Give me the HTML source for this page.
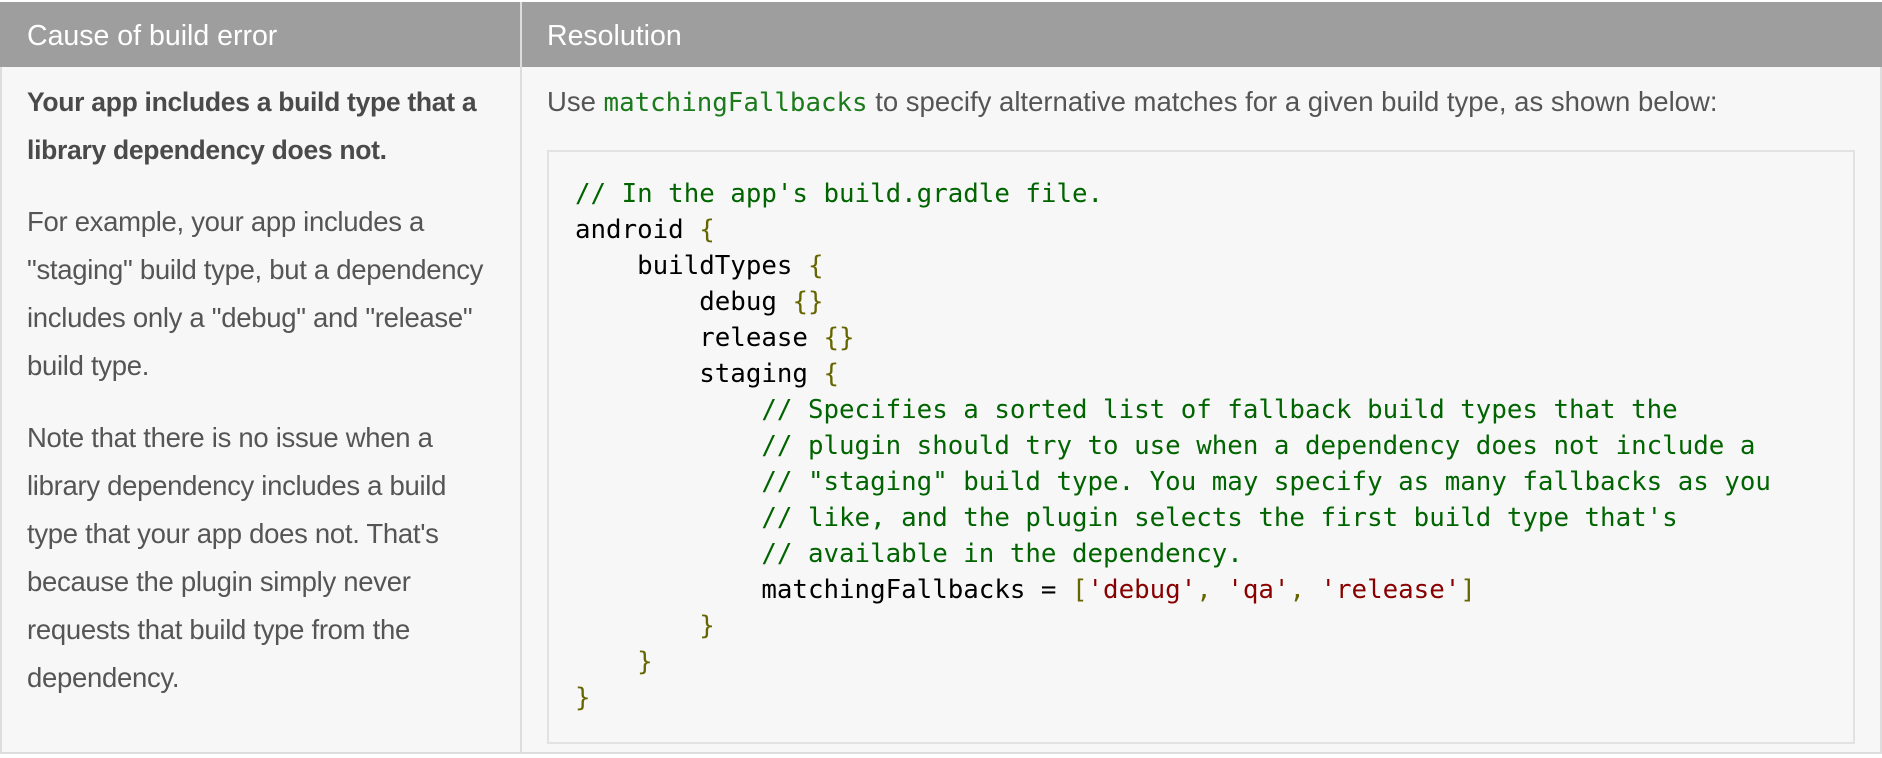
<!DOCTYPE html>
<html><head><meta charset="utf-8"><style>
html,body{margin:0;padding:0;width:1882px;height:758px;background:#fff;overflow:hidden}
.t{position:absolute;left:0;top:2px;width:1882px;height:752px;background:#f7f7f7;border:2px solid #ddd;border-top:none;box-sizing:border-box}
.h{position:absolute;left:0;top:2px;width:1882px;height:65px;background:#9e9e9e}
.div{position:absolute;left:520px;top:2px;width:2px;height:752px;background:#ddd}
.hd{position:absolute;top:18px;color:#fff;font:28.5px/36px "Liberation Sans",sans-serif;white-space:nowrap;letter-spacing:0}
.tx{position:absolute;left:27px;font:27.5px/48px "Liberation Sans",sans-serif;color:#555;white-space:nowrap;letter-spacing:-0.3px}
.b{font-weight:bold;color:#4a4a4a;font-size:26.5px}
.code{position:absolute;left:547px;top:150px;width:1308px;height:594px;border:2px solid #e2e2e2;box-sizing:border-box;background:#f7f7f7}
pre{position:absolute;left:575px;top:176px;margin:0;font:25.8px/36px "DejaVu Sans Mono",monospace;color:#000}
.c{color:#006400}.p{color:#666600}.s{color:#880000}
.ic{font-family:"DejaVu Sans Mono",monospace;color:#1b7a1b;font-size:25.8px;letter-spacing:0}
</style></head><body>
<div class="t"></div>
<div class="h"></div>
<div class="div"></div>
<div class="hd" style="left:27px">Cause of build error</div>
<div class="hd" style="left:547px">Resolution</div>
<div class="tx b" style="top:78px">Your app includes a build type that a<br>library dependency does not.</div>
<div class="tx" style="top:198px">For example, your app includes a<br>"staging" build type, but a dependency<br>includes only a "debug" and "release"<br>build type.</div>
<div class="tx" style="top:414px">Note that there is no issue when a<br>library dependency includes a build<br>type that your app does not. That's<br>because the plugin simply never<br>requests that build type from the<br>dependency.</div>
<div class="tx" style="left:547px;top:78px;letter-spacing:0">Use <span class="ic">matchingFallbacks</span> to specify alternative matches for a given build type, as shown below:</div>
<div class="code"></div>
<pre><span class="c">// In the app's build.gradle file.</span>
android <span class="p">{</span>
    buildTypes <span class="p">{</span>
        debug <span class="p">{}</span>
        release <span class="p">{}</span>
        staging <span class="p">{</span>
            <span class="c">// Specifies a sorted list of fallback build types that the</span>
            <span class="c">// plugin should try to use when a dependency does not include a</span>
            <span class="c">// "staging" build type. You may specify as many fallbacks as you</span>
            <span class="c">// like, and the plugin selects the first build type that's</span>
            <span class="c">// available in the dependency.</span>
            matchingFallbacks = <span class="p">[</span><span class="s">'debug'</span><span class="p">,</span> <span class="s">'qa'</span><span class="p">,</span> <span class="s">'release'</span><span class="p">]</span>
        <span class="p">}</span>
    <span class="p">}</span>
<span class="p">}</span></pre>
</body></html>
